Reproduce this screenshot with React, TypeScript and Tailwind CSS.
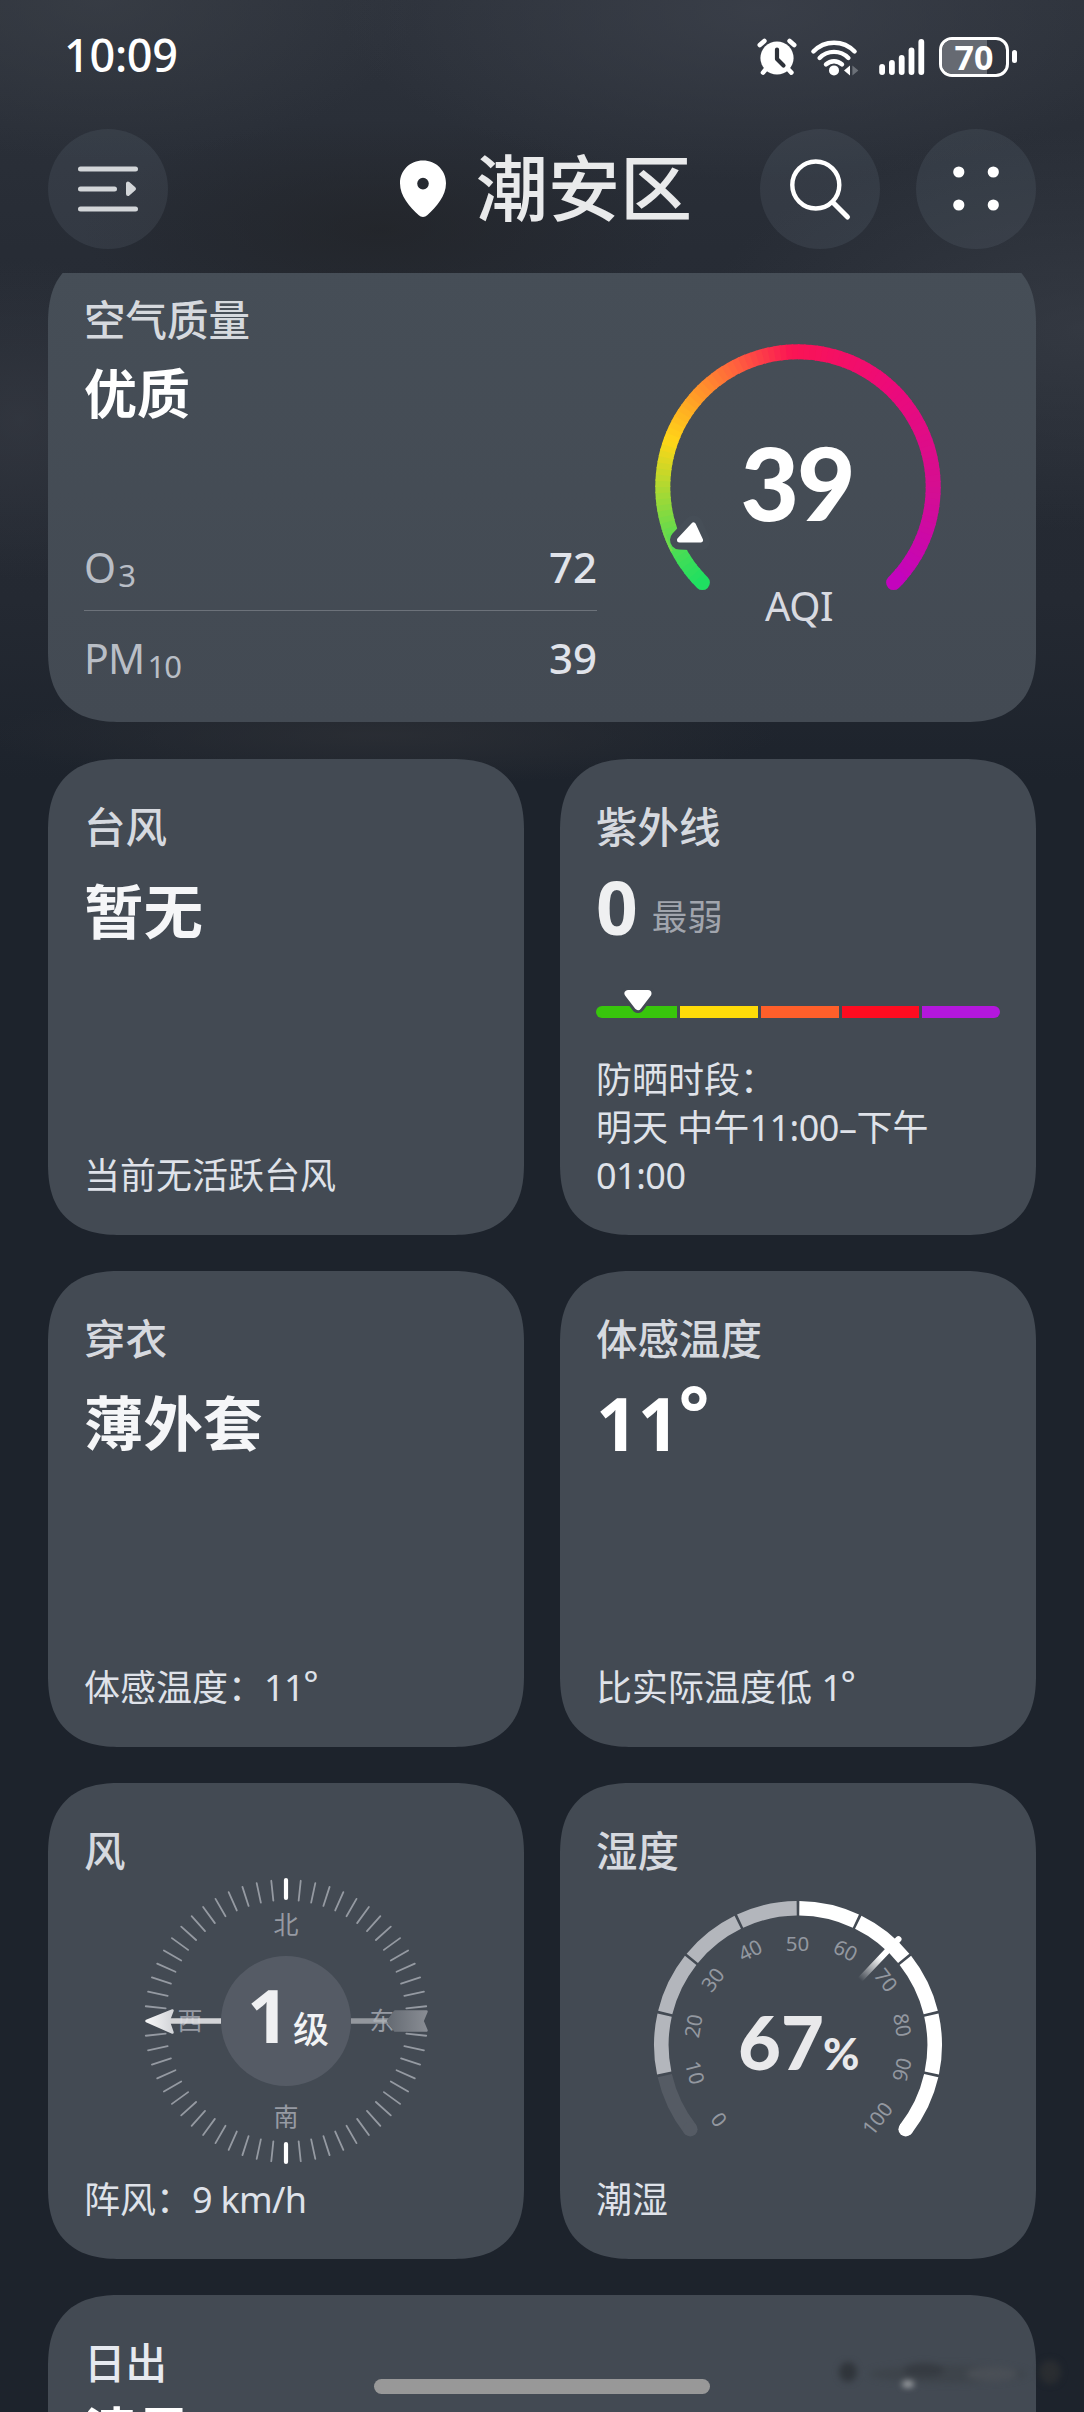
import type { ReactNode } from "react";

const FONT = "font-['Noto_Sans','Noto_Sans_CJK_SC',sans-serif]";
const SVG_FONT = "'Noto Sans','Noto Sans CJK SC',sans-serif";
const ROUND_FONT = "Lato,'Noto Sans CJK SC',sans-serif";

const CARD =
  "rounded-[72px] [corner-shape:superellipse(1.3)] bg-[#434a53] px-9 flex flex-col";

/** Point on a circle; deg is clockwise from twelve o'clock. */
function polar(cx: number, cy: number, r: number, deg: number): [number, number] {
  const a = (deg * Math.PI) / 180;
  return [cx + r * Math.sin(a), cy - r * Math.cos(a)];
}

function arc(cx: number, cy: number, r: number, from: number, to: number) {
  const [x1, y1] = polar(cx, cy, r, from);
  const [x2, y2] = polar(cx, cy, r, to);
  return `M${x1.toFixed(2)} ${y1.toFixed(2)}A${r} ${r} 0 ${to - from > 180 ? 1 : 0} 1 ${x2.toFixed(2)} ${y2.toFixed(2)}`;
}

/* ---------- status bar ---------- */

function AlarmIcon() {
  return (
    <svg width="40" height="40" viewBox="0 0 40 40" fill="none" strokeLinecap="round">
      <g stroke="#fff" strokeWidth="4.6">
        <path d="M2.8 8 7.4 4M37.2 8 32.6 4M9 32 6 35.6M31 32l3.4 3.6" />
      </g>
      <circle cx="20" cy="21" r="16.6" fill="#fff" />
      <path d="M20 12.5V22l6.5 6.5" stroke="#2d3139" strokeWidth="4.2" strokeLinejoin="round" />
    </svg>
  );
}

function WifiIcon() {
  return (
    <svg width="50" height="40" viewBox="0 0 50 40" fill="none" strokeLinecap="round">
      <g stroke="#fff" strokeWidth="4.4">
        <path d="M3.4 14.5a28.5 28.5 0 0 1 41.2 0" />
        <path d="M9.6 21a20 20 0 0 1 28.8 0" />
        <path d="M16 27.4a11.6 11.6 0 0 1 16 0" />
      </g>
      <circle cx="24" cy="33.4" r="5" fill="#fff" />
      <path d="M40 28.5v10l-6-5z" fill="#fff" />
      <path d="M42.4 28.5v10l6-5z" fill="#6b7078" />
    </svg>
  );
}

function SignalIcon() {
  const tops = [27, 23, 18, 10.5, 2];
  return (
    <svg width="48" height="40" viewBox="0 0 48 40">
      {tops.map((t, i) => (
        <rect key={t} x={1.2 + i * 9.8} y={t} width="5.8" height={38 - t} rx="2.9" fill="#fff" />
      ))}
    </svg>
  );
}

function Battery() {
  return (
    <div className="flex items-center gap-[3px]">
      <div className="relative flex h-[40px] w-[70px] items-center justify-center rounded-[13px] border-[3px] border-white">
        <div className="absolute inset-y-0 left-0 w-[45px] rounded-l-[10px] bg-[#666a72]" />
        <span className="relative text-[34px] leading-[34px] font-bold text-white">70</span>
      </div>
      <div className="h-[13px] w-[5px] rounded-full bg-white" />
    </div>
  );
}

function StatusBar() {
  return (
    <div className="flex h-[113px] items-center justify-between pr-[67px] pl-[64px]">
      <span className="pb-[3px] text-[45px] leading-[46px] font-medium tracking-[-0.3px] text-white">10:09</span>
      <div className="flex items-center">
        <AlarmIcon />
        <div className="ml-[13px]">
          <WifiIcon />
        </div>
        <div className="mr-[13px] ml-[18px]">
          <SignalIcon />
        </div>
        <Battery />
      </div>
    </div>
  );
}

/* ---------- header ---------- */

function RoundButton({ children }: { children: ReactNode }) {
  return (
    <button className="flex size-[120px] items-center justify-center rounded-full bg-[#8c9fab]/12">
      {children}
    </button>
  );
}

function Header() {
  return (
    <header className="mt-4 flex h-[120px] items-center px-12">
      <RoundButton>
        <svg width="60" height="60" viewBox="0 0 60 60" fill="none" stroke="#d3d6d9" strokeLinecap="round">
          <path d="M2.5 10h55M2.5 30h34M2.5 50h55" strokeWidth="5" />
          <path d="M50 24.5v10.5l6-5.3z" fill="#d3d6d9" strokeWidth="4" strokeLinejoin="round" />
        </svg>
      </RoundButton>
      <div className="ml-[232px] flex items-center">
        <svg width="46" height="58" viewBox="0 0 46 58">
          <path
            d="M23 .5C10 .5 0 10.4 0 23.2 0 36 9.500 46.500 18.800 55.300a6 6 0 0 0 8.400 0C36.500 46.500 46 36 46 23.200 46 10.400 36 .5 23 .5Zm0 17.300a5.800 5.800 0 1 1 0 11.600 5.800 5.800 0 0 1 0-11.600Z"
            fill="#fff"
            fillRule="evenodd"
          />
        </svg>
        <h1 className="ml-[30px] pb-[4px] text-[72px] leading-[112px] font-medium text-[#e9eaeb]">潮安区</h1>
      </div>
      <div className="ml-auto flex gap-9">
        <RoundButton>
          <svg width="66" height="66" viewBox="0 0 66 66" fill="none" stroke="#fff" strokeLinecap="round">
            <circle cx="28.800" cy="29" r="23.500" strokeWidth="4.400" />
            <path d="M46 46.500 60.500 61" strokeWidth="5" />
          </svg>
        </RoundButton>
        <RoundButton>
          <svg width="48" height="48" viewBox="0 0 48 48" fill="#fff">
            <circle cx="6.800" cy="7" r="5.600" />
            <circle cx="41.300" cy="7" r="5.600" />
            <circle cx="6.800" cy="40" r="5.600" />
            <circle cx="41.300" cy="40" r="5.600" />
          </svg>
        </RoundButton>
      </div>
    </header>
  );
}

/* ---------- air quality ---------- */

const AQI_STOPS: [number, number[]][] = [
  [0, [28, 224, 98]],
  [0.09, [96, 219, 78]],
  [0.167, [176, 216, 48]],
  [0.24, [255, 214, 24]],
  [0.32, [255, 156, 40]],
  [0.4, [255, 96, 62]],
  [0.49, [250, 20, 84]],
  [0.66, [236, 10, 122]],
  [0.84, [212, 14, 146]],
  [1, [194, 4, 190]],
];

function aqiColor(t: number) {
  let i = 1;
  while (i < AQI_STOPS.length - 1 && t > AQI_STOPS[i][0]) i++;
  const [t0, a] = AQI_STOPS[i - 1];
  const [t1, b] = AQI_STOPS[i];
  const k = (t - t0) / (t1 - t0);
  return `rgb(${a.map((v, j) => Math.round(v + (b[j] - v) * k)).join(",")})`;
}

function AqiGauge() {
  const n = 108;
  const step = 270 / n;
  return (
    <svg width="300" height="300" viewBox="0 0 300 300" fill="none">
      {Array.from({ length: n }, (_, i) => {
        const from = -135 + i * step;
        return (
          <path
            key={i}
            d={arc(150, 150, 135.2, from, Math.min(135, from + step + 0.6))}
            stroke={aqiColor((i + 0.5) / n)}
            strokeWidth="15"
            strokeLinecap={i === 0 || i === n - 1 ? "round" : "butt"}
          />
        );
      })}
      <path
        d="M31.500 203 45.500 188l7 16z"
        fill="#464e57"
        stroke="#464e57"
        strokeWidth="19"
        strokeLinejoin="round"
      />
      <path d={arc(150, 150, 141.6, -117, -108)} stroke="#72da4a" strokeWidth="2.200" />
      <path d="M31.500 203 45.500 188l7 15z" fill="#fff" stroke="#fff" strokeWidth="5" strokeLinejoin="round" />
      <text x="149" y="184" textAnchor="middle" fontFamily={ROUND_FONT} fontSize="101" fontWeight="900" fill="#fff" letterSpacing="-2">
        39
      </text>
      <text x="151" y="284" textAnchor="middle" fontFamily={SVG_FONT} fontSize="40" fill="#d8dae1" letterSpacing="-0.5">
        AQI
      </text>
    </svg>
  );
}

function Pollutant({ name, sub, value }: { name: string; sub: string; value: string }) {
  return (
    <div className="flex h-[60px] items-center justify-between">
      <span className="flex items-baseline gap-[3px] text-[41px] leading-[60px] tracking-[-0.8px] text-[#b9bec6]">
        {name}
        <span className="relative top-[4px] text-[31px] leading-[30px]">{sub}</span>
      </span>
      <span className="text-[42px] leading-[60px] font-medium text-[#e0e3ea]">{value}</span>
    </div>
  );
}

function AirCard() {
  return (
    <div className="mt-6 h-[449px] overflow-hidden">
      <section className="-mt-[21px] flex h-[470px] rounded-[72px] bg-[#464e57] bg-linear-to-b from-[#464e57] to-[#434a53] pl-9 [corner-shape:superellipse(1.3)]">
        <div className="w-[513px] pt-12">
          <h2 className="text-[41.500px] leading-[40px] font-medium text-[#d6d9de]">空气质量</h2>
          <p className="mt-[24px] text-[53px] leading-[60px] font-bold text-white">优质</p>
          <div className="mt-[113px]">
            <Pollutant name="O" sub="3" value="72" />
          </div>
          <div className="mt-[13px] mb-[17px] h-px bg-[#6c727a]" />
          <Pollutant name="PM" sub="10" value="39" />
        </div>
        <div className="mt-[85px] ml-[51px]">
          <AqiGauge />
        </div>
      </section>
    </div>
  );
}

/* ---------- square tiles ---------- */

function Tile({ title, footer, children }: { title: string; footer?: ReactNode; children?: ReactNode }) {
  return (
    <section className={`${CARD} h-[476px] pt-12 pb-[35px]`}>
      <h2 className="text-[41.500px] leading-[40px] font-medium text-[#d6d9df]">{title}</h2>
      {children}
      <div className="mt-auto text-[36px] leading-[48px] whitespace-nowrap text-[#dfe2e9]">{footer}</div>
    </section>
  );
}

function BigText({ children }: { children: ReactNode }) {
  return <p className="mt-[28px] text-[59.500px] leading-[72px] font-bold text-[#f5f6f8]">{children}</p>;
}

function UvTile() {
  return (
    <Tile
      title="紫外线"
      footer={
        <>
          <p>防晒时段：</p>
          <p>
            明天 中午<span className="tracking-[-0.5px]">11:00–</span>下午
          </p>
          <p className="tracking-[-0.5px]">01:00</p>
        </>
      }
    >
      <div className="mt-[24px] flex h-[72px] items-center">
        <span className="text-[73px] leading-[72px] font-bold text-[#eff0f1]">0</span>
        <span className="mt-[18px] ml-[14px] text-[35.500px] leading-[54px] text-[#a1a5ad]">最弱</span>
      </div>
      <div className="relative mt-[63px]">
        <div className="flex h-[12px] gap-[3px] overflow-hidden rounded-full">
          <div className="w-[81px] bg-[#38c60c]" />
          <div className="flex-1 bg-[#ffdc08]" />
          <div className="flex-1 bg-[#ff5f2a]" />
          <div className="flex-1 bg-[#ff0c20]" />
          <div className="flex-1 bg-[#b317dc]" />
        </div>
        <svg className="absolute -top-[20px] left-[23px]" width="38" height="30" viewBox="0 0 38 30" strokeLinejoin="round">
          <path d="M9 7.500h20L19 20.500z" fill="#434a53" stroke="#434a53" strokeWidth="13" />
          <path d="M9 7.500h20L19 20.500z" fill="#fff" stroke="#fff" strokeWidth="7" />
        </svg>
      </div>
    </Tile>
  );
}

function Compass() {
  return (
    <svg className="self-center" width="300" height="300" viewBox="0 0 300 300" fill="none">
      <defs>
        <linearGradient id="head" x1="0" x2="1">
          <stop offset="0" stopColor="#f7f7f8" />
          <stop offset="1" stopColor="#d3d5d9" />
        </linearGradient>
        <linearGradient id="tail" x1="0" x2="1">
          <stop offset="0" stopColor="#656b73" />
          <stop offset="1" stopColor="#888c93" />
        </linearGradient>
      </defs>
      {Array.from({ length: 60 }, (_, i) => {
        if (i % 15 === 0) return null;
        const [x1, y1] = polar(150, 150, 121, i * 6);
        const [x2, y2] = polar(150, 150, 141, i * 6);
        return <line key={i} x1={x1} y1={y1} x2={x2} y2={y2} stroke="#959aa2" strokeWidth="1.800" strokeLinecap="round" />;
      })}
      <path d="M150 9v18M150 273v18" stroke="#fff" strokeWidth="4.200" strokeLinecap="round" />
      <g fontFamily={SVG_FONT} fontSize="25" fill="#969aa3" textAnchor="middle">
        <text x="150" y="62.500">北</text>
        <text x="150" y="255">南</text>
        <text x="54" y="158.500">西</text>
        <text x="246" y="158.500">东</text>
      </g>
      <path d="M32 150H85" stroke="#dfe0e3" strokeWidth="5.600" strokeOpacity=".92" />
      <path d="M10.500 150 36.500 139.500 32.500 150 36.500 161.500z" fill="url(#head)" stroke="url(#head)" strokeWidth="2.500" strokeLinejoin="round" />
      <path d="M215 150H257" stroke="#aeb1b6" strokeWidth="5.600" strokeOpacity=".75" />
      <path
        d="M252 150 259 140.500H290.500L286.500 150 290.500 159.500H259z"
        fill="url(#tail)"
        stroke="url(#tail)"
        strokeWidth="2.500"
        strokeLinejoin="round"
      />
      <circle cx="150" cy="150" r="65" fill="#555b65" />
      <text x="111" y="172" fontFamily={SVG_FONT} fontSize="74" fontWeight="700" fill="#eff0f2">
        1
      </text>
      <text x="157" y="172" fontFamily={SVG_FONT} fontSize="36" fontWeight="500" fill="#f2f3f5">
        级
      </text>
    </svg>
  );
}

const HUMIDITY_LABELS = [
  { v: "0", x: -79, y: 74.6, r: 52 },
  { v: "10", x: -103, y: 27.6, r: 75 },
  { v: "20", x: -104.7, y: -19, r: -80 },
  { v: "30", x: -85.3, y: -65.4, r: -52 },
  { v: "40", x: -48, y: -94.7, r: -27 },
  { v: "50", x: -0.5, y: -102, r: 0 },
  { v: "60", x: 47.7, y: -94.7, r: 27 },
  { v: "70", x: 88, y: -65, r: 52 },
  { v: "80", x: 104.3, y: -20, r: 80 },
  { v: "90", x: 103.7, y: 24.6, r: -75 },
  { v: "100", x: 79.3, y: 73.6, r: -52 },
];

function HumidityGauge() {
  const step = 25.6;
  const [nx1, ny1] = polar(150, 150, 146, 43.5);
  const [nx2, ny2] = polar(150, 150, 90, 43.5);
  return (
    <svg className="mt-[24px] self-center" width="300" height="264" viewBox="0 0 300 264" fill="none">
      <defs>
        <linearGradient id="needle" gradientUnits="userSpaceOnUse" x1={nx2} y1={ny2} x2={nx1} y2={ny1}>
          <stop offset="0" stopColor="#fff" stopOpacity="0" />
          <stop offset=".55" stopColor="#fff" />
        </linearGradient>
      </defs>
      {Array.from({ length: 10 }, (_, i) => {
        const color = i === 0 ? "#555b64" : i < 5 ? "#b3b6bc" : "#fff";
        const from = -128 + i * step + (i === 0 ? 0 : 0.55);
        const to = -128 + (i + 1) * step - (i === 9 ? 0 : 0.55);
        const [cx, cy] = polar(150, 150, 136.7, i === 0 ? from : to);
        return (
          <g key={i}>
            <path d={arc(150, 150, 136.7, from, to)} stroke={color} strokeWidth="14.600" />
            {(i === 0 || i === 9) && <circle cx={cx} cy={cy} r="7.300" fill={color} />}
          </g>
        );
      })}
      {HUMIDITY_LABELS.map((l) => (
        <text
          key={l.v}
          transform={`translate(${150 + l.x} ${150 + l.y}) rotate(${l.r})`}
          y="7.500"
          textAnchor="middle"
          fontFamily={SVG_FONT}
          fontSize="20.500"
          fill="#9398a0"
        >
          {l.v}
        </text>
      ))}
      <path d={`M${nx2} ${ny2}L${nx1} ${ny1}`} stroke="url(#needle)" strokeWidth="6" strokeLinecap="round" />
      <text x="90" y="175" fontFamily={ROUND_FONT} fontSize="74" fontWeight="900" fill="#e9e9eb">
        67
      </text>
      <text x="175" y="175" fontFamily={ROUND_FONT} fontSize="44" fontWeight="900" fill="#e9e9eb">
        %
      </text>
    </svg>
  );
}

function Degrees({ value }: { value: string }) {
  return (
    <p className="mt-[28px] flex h-[72px] text-[73px] leading-[72px] font-bold text-white">
      {value}
      <span className="relative -top-[12px] -left-px">°</span>
    </p>
  );
}

function SmallDegrees({ value }: { value: string }) {
  return (
    <span className="tracking-[-0.5px]">
      {value}
      <span className="relative -top-[4px] -left-px">°</span>
    </span>
  );
}

/* ---------- page ---------- */

export default function App() {
  return (
    <div
      className={`${FONT} relative h-[2412px] w-[1084px] overflow-hidden bg-[#1d232c] bg-[radial-gradient(380px_200px_at_1084px_330px,#3a3f48aa,transparent),radial-gradient(420px_170px_at_760px_10px,#3c414bcc,transparent),radial-gradient(320px_160px_at_100px_0px,#3b4048b3,transparent),radial-gradient(180px_160px_at_20px_420px,#363a43b3,transparent),radial-gradient(300px_110px_at_380px_230px,#212327b3,transparent),radial-gradient(400px_50px_at_380px_735px,#2c2f35cc,transparent),linear-gradient(180deg,#2d323b_0px,#272c35_250px,#242932_600px,#1d232c_780px)] bg-no-repeat`}
    >
      <StatusBar />
      <Header />
      <main className="px-12">
        <AirCard />
        <div className="mt-[37px] grid grid-cols-2 gap-9">
          <Tile title="台风" footer="当前无活跃台风">
            <BigText>暂无</BigText>
          </Tile>
          <UvTile />
          <Tile
            title="穿衣"
            footer={
              <p>
                体感温度：
                <SmallDegrees value="11" />
              </p>
            }
          >
            <BigText>薄外套</BigText>
          </Tile>
          <Tile
            title="体感温度"
            footer={
              <p>
                比实际温度低 <SmallDegrees value="1" />
              </p>
            }
          >
            <Degrees value="11" />
          </Tile>
          <Tile
            title="风"
            footer={
              <p>
                阵风：<span className="tracking-[-0.7px]">9 km/h</span>
              </p>
            }
          >
            <Compass />
          </Tile>
          <Tile title="湿度" footer="潮湿">
            <HumidityGauge />
          </Tile>
        </div>
        <section className={`${CARD} mt-9 h-[476px] pt-12`}>
          <h2 className="text-[41.500px] leading-[40px] font-medium text-[#e6e9ef]">日出</h2>
          <p className="mt-[19px] text-[53px] leading-[60px] font-bold text-white">清晨</p>
        </section>
      </main>
      <svg className="absolute top-[2350px] left-[824px] blur-[3px]" width="250" height="48" viewBox="0 0 250 48">
        <ellipse cx="24" cy="22" rx="9" ry="10" fill="#30353b" />
        <ellipse cx="124" cy="24" rx="78" ry="9" fill="#3e444b" />
        <ellipse cx="100" cy="20" rx="20" ry="7" fill="#363b42" />
        <ellipse cx="168" cy="24" rx="26" ry="7" fill="#4a4f56" />
        <ellipse cx="84" cy="34" rx="6" ry="3" fill="#b9bbbe" />
        <ellipse cx="226" cy="22" rx="11" ry="12" fill="#2a2d31" />
      </svg>
      <div className="absolute top-[2379px] left-[374px] h-[15px] w-[336px] rounded-full bg-[#989898]" />
    </div>
  );
}
